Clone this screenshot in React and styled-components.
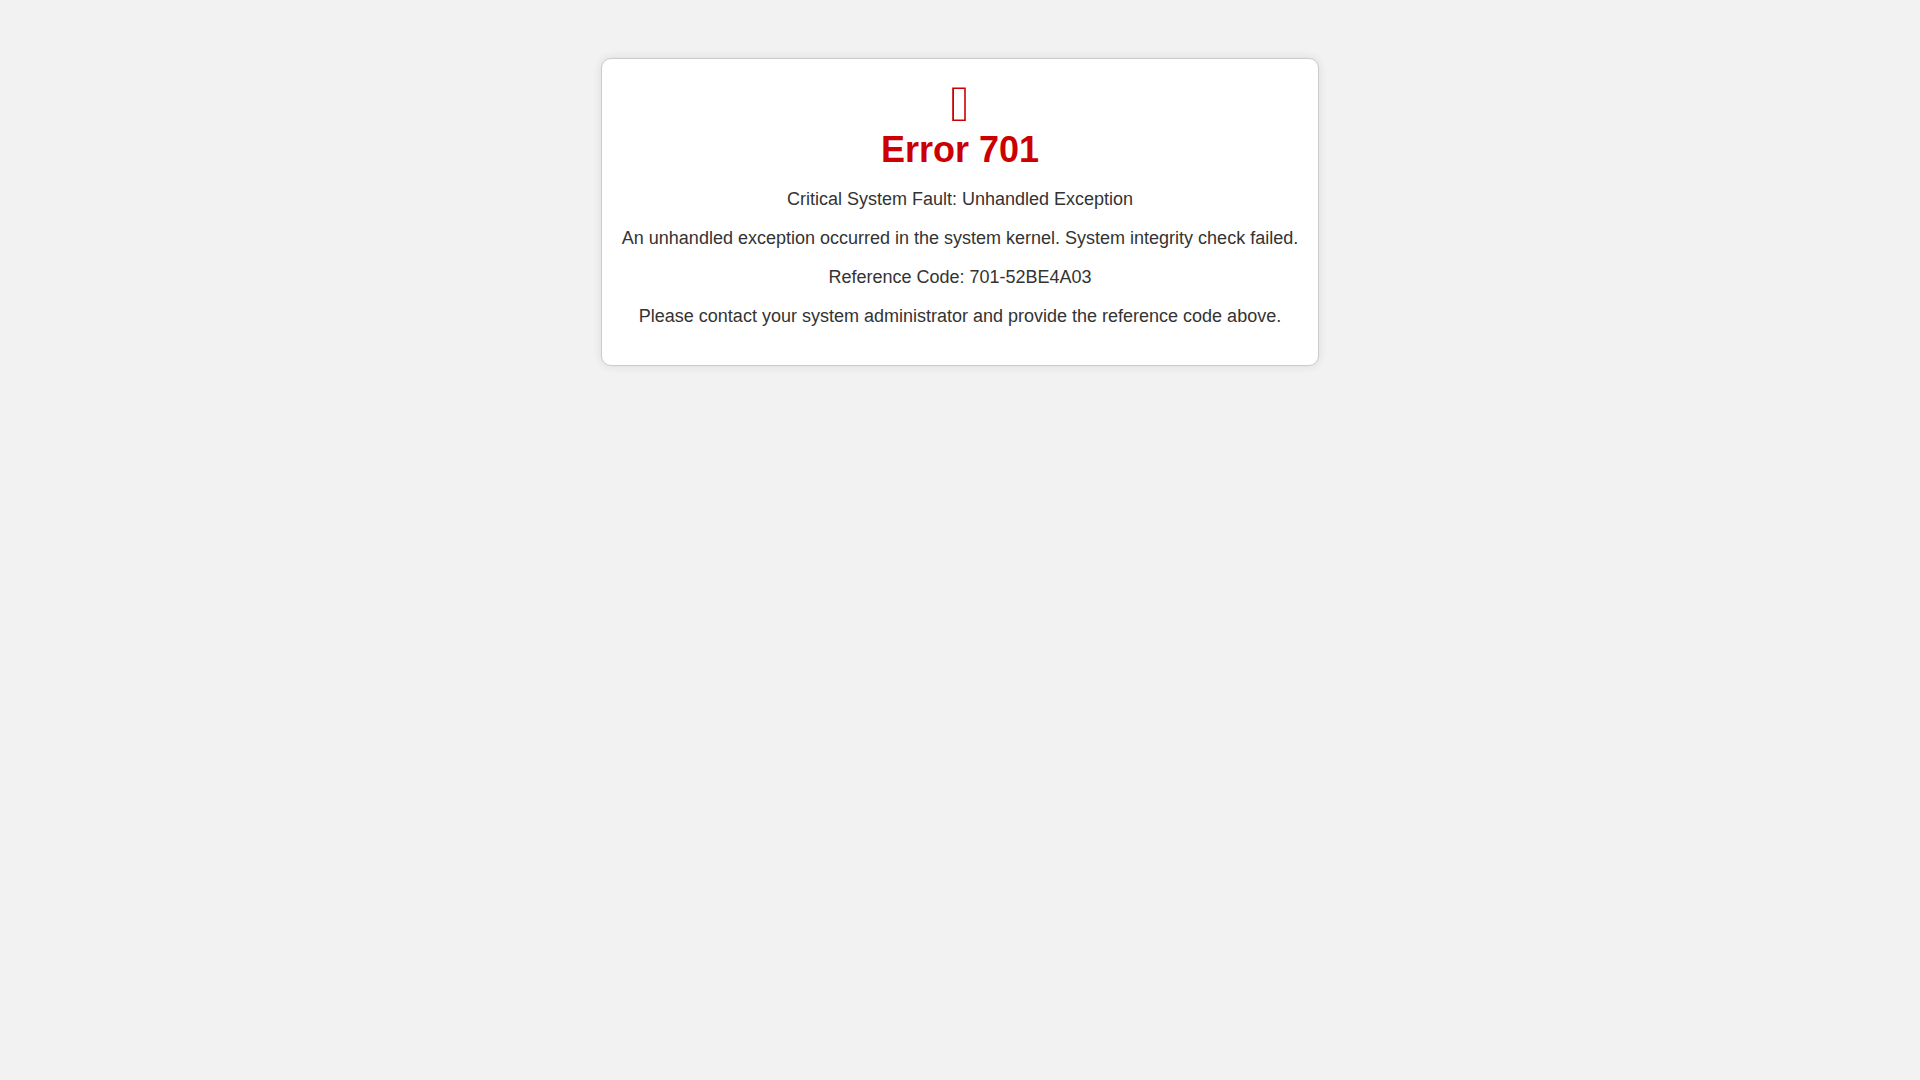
import React from "react";
import styled, { createGlobalStyle } from "styled-components";

const GlobalStyle = createGlobalStyle`
  body {
    margin: 0;
    padding: 50px;
    background-color: #f2f2f2;
    color: #333;
    font-family: "Liberation Sans", Arial, sans-serif;
    text-align: center;
  }
`;

const ErrorBox = styled.main`
  display: inline-block;
  margin-top: 8px;
  padding: 20px;
  background-color: #fff;
  border: 1px solid #ccc;
  border-radius: 10px;
  box-shadow: 0 0 10px rgba(0, 0, 0, 0.1);
`;

const Icon = styled.svg`
  display: block;
  width: 16px;
  height: 34px;
  margin: 8px auto;
`;

const Title = styled.h1`
  margin: 0;
  color: #c00;
  font-size: 36px;
  line-height: 42px;
`;

const Message = styled.p`
  margin: 18px 0;
  font-size: 18px;
  line-height: 21px;
`;

const messages = [
  "Critical System Fault: Unhandled Exception",
  "An unhandled exception occurred in the system kernel. System integrity check failed.",
  "Reference Code: 701-52BE4A03",
  "Please contact your system administrator and provide the reference code above.",
];

const App = () => {
  return (
    <>
      <GlobalStyle />
      <ErrorBox>
        <Icon viewBox="0 0 16 34" aria-hidden="true">
          <path
            d="M0.2 0.5H13.8V34H0.2ZM2 2V32.4H12.2V2Z"
            fill="#c00"
            fillRule="evenodd"
          />
        </Icon>
        <Title>Error 701</Title>
        {messages.map((message) => (
          <Message key={message}>{message}</Message>
        ))}
      </ErrorBox>
    </>
  );
};

export default App;
